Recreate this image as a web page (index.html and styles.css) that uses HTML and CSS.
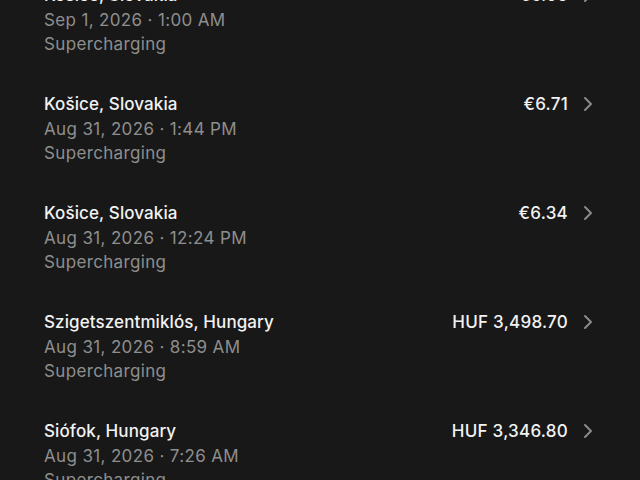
FILE: index.html
```html
<!DOCTYPE html>
<html>

<head>
  <link rel="stylesheet" href="styles.css">
</head>

<body>
  <ul class="charges">
    <li class="charge">
      <div class="info">
        <div class="place">Košice, Slovakia</div>
        <div class="meta">Sep 1, 2026 · 1:00 AM</div>
        <div class="meta">Supercharging</div>
      </div>
      <div class="amount">€6.05</div>
      <svg class="chevron" viewBox="0 0 12 16"><path d="M3 2 L9 8 L3 14" /></svg>
    </li>
    <li class="charge">
      <div class="info">
        <div class="place">Košice, Slovakia</div>
        <div class="meta">Aug 31, 2026 · 1:44 PM</div>
        <div class="meta">Supercharging</div>
      </div>
      <div class="amount">€6.71</div>
      <svg class="chevron" viewBox="0 0 12 16"><path d="M3 2 L9 8 L3 14" /></svg>
    </li>
    <li class="charge">
      <div class="info">
        <div class="place">Košice, Slovakia</div>
        <div class="meta">Aug 31, 2026 · 12:24 PM</div>
        <div class="meta">Supercharging</div>
      </div>
      <div class="amount">€6.34</div>
      <svg class="chevron" viewBox="0 0 12 16"><path d="M3 2 L9 8 L3 14" /></svg>
    </li>
    <li class="charge">
      <div class="info">
        <div class="place">Szigetszentmiklós, Hungary</div>
        <div class="meta">Aug 31, 2026 · 8:59 AM</div>
        <div class="meta">Supercharging</div>
      </div>
      <div class="amount">HUF 3,498.70</div>
      <svg class="chevron" viewBox="0 0 12 16"><path d="M3 2 L9 8 L3 14" /></svg>
    </li>
    <li class="charge">
      <div class="info">
        <div class="place">Siófok, Hungary</div>
        <div class="meta">Aug 31, 2026 · 7:26 AM</div>
        <div class="meta">Supercharging</div>
      </div>
      <div class="amount">HUF 3,346.80</div>
      <svg class="chevron" viewBox="0 0 12 16"><path d="M3 2 L9 8 L3 14" /></svg>
    </li>
  </ul>
</body>

</html>
```

FILE: styles.css
```css
body {
  margin: 0;
  background-color: #181818;
  font-family: Inter, "Liberation Sans", sans-serif;
  overflow: hidden;
}

.charges {
  list-style: none;
  margin: -35px 0 0 0;
  padding: 0 46px 0 44px;
}

.charge {
  display: flex;
  align-items: flex-start;
  height: 109px;
  box-sizing: border-box;
  padding-top: 18px;
}

.info {
  flex: 1;
  font-size: 17px;
  line-height: 24.5px;
}

.place {
  color: #f2f2f2;
  font-weight: 500;
  letter-spacing: 0.1px;
}

.meta {
  color: #8e8e8e;
  letter-spacing: 0.35px;
}

.amount {
  color: #f2f2f2;
  font-size: 17px;
  font-weight: 500;
  line-height: 24.5px;
  letter-spacing: 0.25px;
}

.chevron {
  width: 12px;
  height: 16px;
  margin: 4px 0 0 14px;
  fill: none;
  stroke: #8a8a8a;
  stroke-width: 2;
  stroke-linecap: round;
  stroke-linejoin: round;
}
```
